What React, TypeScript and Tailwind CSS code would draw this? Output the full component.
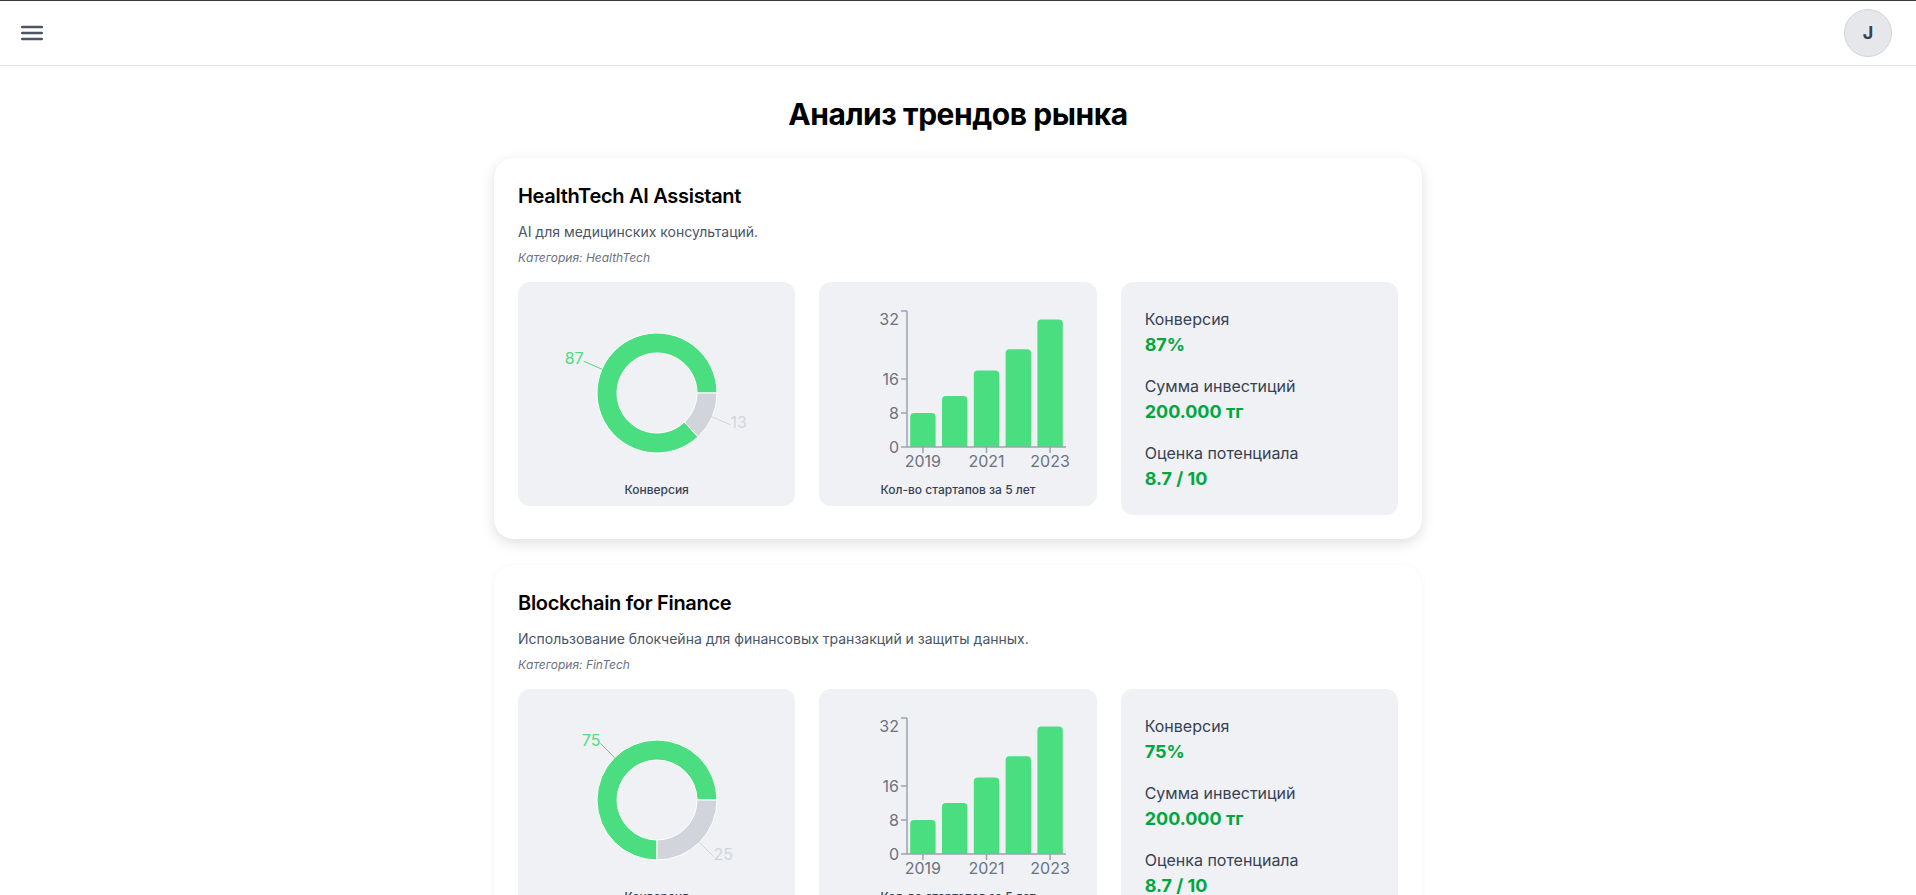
import React from "react";

type Trend = {
  title: string;
  description: string;
  category: string;
  conversion: number;
  investment: string;
  potential: string;
  startups: number[];
};

const trends: Trend[] = [
  {
    title: "HealthTech AI Assistant",
    description: "AI для медицинских консультаций.",
    category: "HealthTech",
    conversion: 87,
    investment: "200.000 тг",
    potential: "8.7 / 10",
    startups: [8, 12, 18, 23, 30],
  },
  {
    title: "Blockchain for Finance",
    description: "Использование блокчейна для финансовых транзакций и защиты данных.",
    category: "FinTech",
    conversion: 75,
    investment: "200.000 тг",
    potential: "8.7 / 10",
    startups: [8, 12, 18, 23, 30],
  },
  {
    title: "EdTech Platform",
    description: "Онлайн-платформа для персонализированного обучения.",
    category: "EdTech",
    conversion: 64,
    investment: "150.000 тг",
    potential: "7.9 / 10",
    startups: [6, 10, 15, 21, 27],
  },
];

const GREEN = "#4ade80";
const GRAY = "#d1d5db";

const polar = (cx: number, cy: number, r: number, a: number) => {
  const rad = (a * Math.PI) / 180;
  return [cx + r * Math.cos(rad), cy - r * Math.sin(rad)];
};

function sector(cx: number, cy: number, ri: number, ro: number, a0: number, a1: number) {
  const large = a1 - a0 > 180 ? 1 : 0;
  const [ox0, oy0] = polar(cx, cy, ro, a0);
  const [ox1, oy1] = polar(cx, cy, ro, a1);
  const [ix0, iy0] = polar(cx, cy, ri, a0);
  const [ix1, iy1] = polar(cx, cy, ri, a1);
  return `M${ox0},${oy0} A${ro},${ro} 0 ${large} 0 ${ox1},${oy1} L${ix1},${iy1} A${ri},${ri} 0 ${large} 1 ${ix0},${iy0} Z`;
}

function Donut({ value }: { value: number }) {
  const cx = 130;
  const cy = 103;
  const slices = [
    { v: value, color: GREEN },
    { v: 100 - value, color: GRAY },
  ];
  let start = 0;
  return (
    <svg width={260} height={192} className="mx-auto block">
      {slices.map((s, i) => {
        const a0 = start;
        const a1 = start + (s.v / 100) * 360;
        start = a1;
        const mid = (a0 + a1) / 2;
        const [lx0, ly0] = polar(cx, cy, 60, mid);
        const [lx1, ly1] = polar(cx, cy, 80, mid);
        return (
          <g key={i}>
            <path d={sector(cx, cy, 40, 60, a0, a1)} fill={s.color} stroke="#fff" strokeWidth={1} />
            <path d={`M${lx0},${ly0} L${lx1},${ly1}`} stroke={s.color} fill="none" />
            <text
              x={lx1}
              y={ly1 - 3}
              fill={s.color}
              fontSize={16}
              textAnchor={lx1 < cx ? "end" : "start"}
              dominantBaseline="central"
            >
              {s.v}
            </text>
          </g>
        );
      })}
    </svg>
  );
}

function Bars({ data }: { data: number[] }) {
  const x0 = 79;
  const x1 = 238;
  const yTop = 21;
  const yBottom = 157;
  const k = (yBottom - yTop) / 32;
  const band = (x1 - x0) / data.length;
  const years = [2019, 2020, 2021, 2022, 2023];
  const ticks = [
    { v: 32, ty: 29 },
    { v: 16, ty: yBottom - 16 * k },
    { v: 8, ty: yBottom - 8 * k },
    { v: 0, ty: yBottom },
  ];
  return (
    <svg width={260} height={192} className="mx-auto block">
      {data.map((d, i) => {
        const h = d * k;
        const x = x0 + i * band + 3.2;
        const w = band - 6.4;
        const y = yBottom - h;
        const r = 4;
        return (
          <path
            key={i}
            d={`M${x},${yBottom} L${x},${y + r} Q${x},${y} ${x + r},${y} L${x + w - r},${y} Q${x + w},${y} ${x + w},${y + r} L${x + w},${yBottom} Z`}
            fill={GREEN}
          />
        );
      })}
      <line x1={x0} y1={yTop} x2={x0} y2={yBottom} stroke="#9ca3af" strokeWidth={1.5} />
      <line x1={x0} y1={yBottom} x2={x1} y2={yBottom} stroke="#9ca3af" strokeWidth={1.5} />
      {ticks.map((t) => {
        const y = yBottom - t.v * k;
        return (
          <g key={t.v}>
            <line x1={x0 - 6} y1={y} x2={x0} y2={y} stroke="#9ca3af" strokeWidth={1.5} />
            <text x={x0 - 8} y={t.ty} fill="#6b7280" fontSize={16} textAnchor="end" dominantBaseline="central">
              {t.v}
            </text>
          </g>
        );
      })}
      {[0, 2, 4].map((i) => {
        const cx = x0 + i * band + band / 2;
        return (
          <g key={i}>
            <line x1={cx} y1={yBottom} x2={cx} y2={yBottom + 6} stroke="#9ca3af" strokeWidth={1.5} />
            <text x={cx} y={171} fill="#6b7280" fontSize={16} textAnchor="middle" dominantBaseline="central">
              {years[i]}
            </text>
          </g>
        );
      })}
    </svg>
  );
}

function TrendCard({ trend, active }: { trend: Trend; active?: boolean }) {
  return (
    <div
      className={`bg-white rounded-[20px] p-6 ${
        active
          ? "shadow-[0_4px_14px_rgba(0,0,0,0.13)]"
          : "shadow-[0_1px_6px_rgba(0,0,0,0.05)]"
      }`}
    >
      <h2 className="text-xl leading-7 font-semibold tracking-[-0.015em] text-black">{trend.title}</h2>
      <p className="mt-3 text-sm leading-5 text-gray-600">{trend.description}</p>
      <p className="mt-2 text-xs leading-4 italic text-gray-500">Категория: {trend.category}</p>

      <div className="mt-4 grid grid-cols-3 gap-6 items-start">
        <div className="rounded-xl bg-[#f0f1f5] p-2">
          <Donut value={trend.conversion} />
          <p className="text-center text-xs leading-4 font-medium text-gray-700">Конверсия</p>
        </div>
        <div className="rounded-xl bg-[#f0f1f5] p-2">
          <Bars data={trend.startups} />
          <p className="text-center text-xs leading-4 font-medium text-gray-700">
            Кол-во стартапов за 5 лет
          </p>
        </div>
        <div className="rounded-xl bg-[#f0f1f5] px-6 pt-[25px] pb-[22px] flex flex-col gap-[15px]">
          <div>
            <p className="text-base leading-6 text-gray-700">Конверсия</p>
            <p className="text-lg leading-7 font-bold text-green-600">{trend.conversion}%</p>
          </div>
          <div>
            <p className="text-base leading-6 text-gray-700">Сумма инвестиций</p>
            <p className="text-lg leading-7 font-bold text-green-600">{trend.investment}</p>
          </div>
          <div>
            <p className="text-base leading-6 text-gray-700">Оценка потенциала</p>
            <p className="text-lg leading-7 font-bold text-green-600">{trend.potential}</p>
          </div>
        </div>
      </div>
    </div>
  );
}

export default function App() {
  return (
    <div className="min-h-screen bg-white font-['Inter','Noto_Sans',sans-serif]">
      {/* Header */}
      <header className="border-t border-t-[#3a3a3c] border-b border-b-gray-200 bg-white">
        <div className="h-16 flex items-center justify-between pl-[21px] pr-6">
          <button className="text-gray-600">
            <svg width="22" height="16" viewBox="0 0 22 16">
              <path
                d="M1.2 2h19.6M1.2 8h19.6M1.2 14h19.6"
                stroke="#4b5563"
                strokeWidth="2.6"
                strokeLinecap="round"
              />
            </svg>
          </button>
          <div className="w-12 h-12 rounded-full bg-gray-200 border border-gray-300 flex items-center justify-center text-lg font-bold text-gray-700">
            J
          </div>
        </div>
      </header>

      {/* Content */}
      <main className="pt-[30px] pb-10">
        <h1 className="text-center text-3xl leading-9 font-bold tracking-[-0.015em] text-black mb-[26px]">
          Анализ трендов рынка
        </h1>
        <div className="max-w-[928px] mx-auto flex flex-col gap-[26px]">
          {trends.map((t, i) => (
            <TrendCard key={t.title} trend={t} active={i === 0} />
          ))}
        </div>
      </main>
    </div>
  );
}
